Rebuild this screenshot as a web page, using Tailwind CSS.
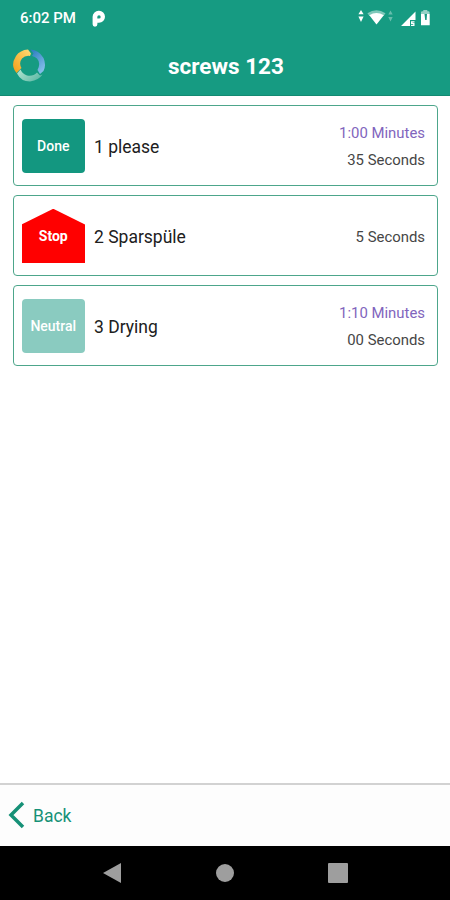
<!DOCTYPE html>
<html lang="en">
<head>
<meta charset="utf-8">
<title>screws 123</title>
<script src="https://cdn.jsdelivr.net/npm/@tailwindcss/browser@4"></script>
</head>
<body class="w-[450px] h-[900px] overflow-hidden flex flex-col bg-white font-['Roboto',sans-serif]">
<header class="h-24 shrink-0 bg-[#169b82] text-white border-b border-[#128a72]">
  <div class="h-9 flex items-center justify-between pl-[20px] pr-[19px]">
    <div class="flex items-center gap-4">
      <span class="text-[15px] leading-9 font-medium whitespace-nowrap">6:02 PM</span>
      <svg class="w-[14px] h-[17px]" viewBox="0 0 14 16"><path fill-rule="evenodd" fill="#fff" d="M7 .3a6 6 0 0 1 0 12H5.400v1.500a2.400 2.400 0 0 1-4.800 0V6.300A6 6 0 0 1 7 .3ZM7 4.700a1.700 1.700 0 0 0-1.700 1.700v1.700H7A1.700 1.700 0 0 0 7 4.700Z"/></svg>
    </div>
    <svg class="w-[73px] h-[18px]" viewBox="358 9 73 18" fill="#fff">
      <path d="M361 10l2.600 4.200h-5.200zM358.400 16.500h5.200L361 22z"/>
      <path opacity=".45" d="M367.400 13.300Q376.500 7 385.500 13.300L383.500 16Q376.500 12 369.500 16z"/>
      <path d="M369.300 15.300Q376.500 10.800 383.800 15.300L376.500 24.500z"/>
      <path opacity=".35" d="M390.500 10.500l2.200 4h-4.400zM388.300 17h4.400l-2.200 4.500z"/>
      <path d="M415.500 11.500V20H410v6h-9z"/>
      <path d="M411 21.200h3.500v1.200h-2v.7h2V26H411v-1h2.200v-.8H411z"/>
      <path opacity=".55" d="M421 14v-1.500q0-1.300 1.300-1.300h1V10h4v1.200h1q1.300 0 1.300 1.300V14z"/>
      <path fill-rule="evenodd" d="M421 14h8.700v11.200H421zM424.500 14h2.500l-.4 6h-1.400z"/>
    </svg>
  </div>
  <div class="h-[60px] grid grid-cols-[60px_1fr_60px] items-center">
    <svg class="ml-3 w-[35px] h-[35px] -mt-px" viewBox="0 0 35 35" fill="none">
      <defs>
        <linearGradient id="gold" x1="0" y1="1" x2="1" y2="0"><stop stop-color="#f29d16"/><stop offset="1" stop-color="#ffdc77"/></linearGradient>
        <linearGradient id="blue" x1="0" y1="0" x2=".6" y2="1"><stop stop-color="#2879bd"/><stop offset="1" stop-color="#83bde9"/></linearGradient>
        <linearGradient id="mint" x1="0" y1="0" x2="1" y2=".5"><stop stop-color="#b5e6d2"/><stop offset="1" stop-color="#62bba8"/></linearGradient>
      </defs>
      <path d="M16 1.500Q8 2 4 8Q-1 16 2.500 22L4.500 25L9.500 20Q6.500 15 10 10.500Q13 7.300 18 8L19 5.500z" fill="url(#gold)"/>
      <path d="M18.500 1.500Q27 2 31.500 10Q34.500 17 31.500 23L28 26L25.500 22Q29 15 25 10.500Q23 8.500 20 8L21.500 5.500z" fill="url(#blue)"/>
      <path d="M8.500 21.500L5 25.500Q9 33.500 18 33.500Q27 32 30.500 26.500L28 27.500L25 24.500Q21 28.800 15 27.500Q10.500 26 8.500 21.500z" fill="url(#mint)"/>
    </svg>
    <h1 class="text-center text-[22.500px] leading-[26px] font-bold whitespace-nowrap pb-px pl-[2px]">screws 123</h1>
  </div>
</header>
<main class="flex-1 flex flex-col gap-[9px] pt-[9.400px] pl-[12.500px] pr-[12px]">
  <section class="h-[81px] flex items-center rounded-[4px] border border-[#4da68b] pl-[8px] pr-[12px]">
    <div class="w-[63.500px] h-[54.500px] rounded-[4px] bg-[#139780] text-white text-[14px] font-medium flex items-center justify-center pt-[2px]">Done</div>
    <div class="ml-[9px] pt-[3px] text-[17.500px] text-[#202020]">1 please</div>
    <div class="ml-auto pt-[3px] text-right text-[14.900px] leading-[27px] text-[#464646]"><div class="text-[#8165bd]">1:00 Minutes</div><div>35 Seconds</div></div>
  </section>
  <section class="h-[81px] flex items-center rounded-[4px] border border-[#4da68b] pl-[8px] pr-[12px]">
    <div class="w-[63.500px] h-[54.500px] bg-[#ff0000] [clip-path:polygon(50%_0,100%_29%,100%_100%,0_100%,0_29%)] text-white text-[14px] font-bold flex items-center justify-center pt-[2px]">Stop</div>
    <div class="ml-[9px] pt-[3px] text-[17.500px] text-[#202020]">2 Sparspüle</div>
    <div class="ml-auto pt-[3px] text-right text-[14.900px] leading-[27px] text-[#464646]">5 Seconds</div>
  </section>
  <section class="h-[81px] flex items-center rounded-[4px] border border-[#4da68b] pl-[8px] pr-[12px]">
    <div class="w-[63.500px] h-[54.500px] rounded-[4px] bg-[#8acbc0] text-white text-[14px] font-medium flex items-center justify-center pt-[2px]">Neutral</div>
    <div class="ml-[9px] pt-[3px] text-[17.500px] text-[#202020]">3 Drying</div>
    <div class="ml-auto pt-[3px] text-right text-[14.900px] leading-[27px] text-[#464646]"><div class="text-[#8165bd]">1:10 Minutes</div><div>00 Seconds</div></div>
  </section>
</main>
<footer class="shrink-0">
  <div class="h-[63px] border-t-2 border-[#d2d2d2] bg-[#fdfdfd] flex items-center pl-[8px] gap-[8px] text-[#169177]">
    <svg class="w-[17px] h-[28px] -mt-[2px]" viewBox="0 0 17 28"><path d="M15 2L3 14L15 26" fill="none" stroke="currentColor" stroke-width="3.500"/></svg>
    <span class="text-[17.500px] pt-px">Back</span>
  </div>
  <nav class="h-[54px] bg-black grid grid-cols-[102px_20px_94px_18px_94px_20px] items-center">
    <svg class="col-start-2 w-[20px] h-[22px]" viewBox="0 0 20 22"><path d="M19 1v20L1 11z" fill="#9e9e9e"/></svg>
    <div class="col-start-4 w-[18px] h-[18px] rounded-full bg-[#9e9e9e]"></div>
    <div class="col-start-6 w-[20px] h-[20px] rounded-[1px] bg-[#9e9e9e]"></div>
  </nav>
</footer>
</body>
</html>
